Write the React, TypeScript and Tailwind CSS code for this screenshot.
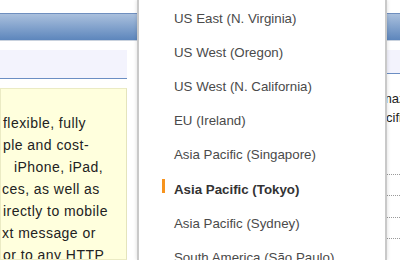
import React from 'react';

const regions = [
  'US East (N. Virginia)',
  'US West (Oregon)',
  'US West (N. California)',
  'EU (Ireland)',
  'Asia Pacific (Singapore)',
  'Asia Pacific (Tokyo)',
  'Asia Pacific (Sydney)',
  'South America (São Paulo)',
];

const selected = 'Asia Pacific (Tokyo)';

// visible slices of the description paragraph behind the menu
const intro = [
  { text: 'flexible, fully', pad: 'pl-[2px]' },
  { text: 'ple and cost-', pad: 'pl-[2px]' },
  { text: 'iPhone, iPad,', pad: 'pl-[13px]' },
  { text: 'ces, as well as', pad: 'pl-[1px]' },
  { text: 'irectly to mobile', pad: 'pl-[2px]' },
  { text: 'xt message or', pad: 'pl-[1px]' },
  { text: 'or to any HTTP', pad: 'pl-[2px]' },
];

function RegionMenu() {
  return (
    <div className="absolute left-[137px] top-0 bottom-0 w-[250px] bg-white border-x-2 border-[#c9c9c9] shadow-[0_0_4px_rgba(0,0,0,0.15)]">
      <ul className="flex flex-col pt-[1.5px]">
        {regions.map(r => {
          const active = r === selected;
          return (
            <li
              key={r}
              className={`relative h-[34.2px] flex items-center pl-[35px] whitespace-nowrap text-[13.3px] ${
                active ? 'font-bold text-[#333]' : 'text-[#4a4a4a]'
              }`}
            >
              {active && <span className="absolute left-[23px] top-[7px] w-[3px] h-[14px] bg-[#f7941e]" />}
              {r}
            </li>
          );
        })}
      </ul>
    </div>
  );
}

export default function App() {
  return (
    <div className="relative w-[400px] h-[260px] overflow-hidden bg-white font-['Liberation_Sans',Arial,sans-serif]">
      <div className="h-[13px]" />
      <div className="h-[28px] border-t border-[#6f8fbf] border-b border-b-[#c9d2de] bg-gradient-to-b from-[#aac0dd] to-[#5d86bc]" />
      <div className="h-[9px]" />

      <div className="flex h-[210px]">
        <div className="w-[127px] flex flex-col">
          <div className="h-[29px] bg-[#f3f3fd] border-b border-[#6b8ec3]" />
          <div className="mt-[9px] flex-1 bg-[#ffffdd] border border-[#ebebc4] border-r-[#e4e4bc] pt-[23px] overflow-hidden">
            {intro.map(l => (
              <div key={l.text} className={`${l.pad} whitespace-nowrap text-[14px] tracking-[0.45px] leading-[22px] text-[#222]`}>
                {l.text}
              </div>
            ))}
          </div>
        </div>

        <div className="flex-1" />

        <div className="w-[14px] flex flex-col overflow-hidden">
          <div className="h-[29px] bg-[#f3f3fd] border-b border-[#6b8ec3]" />
          <div className="mt-[15px] text-[13px] leading-[19px] text-[#222] whitespace-nowrap">
            <div className="-ml-[5px]">maz</div>
            <div>cifi</div>
          </div>
          <div className="mt-[47px] h-[26px] border-t border-dotted border-[#9a9a9a]" />
          <div className="h-[26px] border-t border-dotted border-[#9a9a9a]" />
          <div className="h-[26px] border-t border-dotted border-[#9a9a9a]" />
          <div className="h-[26px] border-t border-dotted border-[#9a9a9a]" />
        </div>
      </div>

      <RegionMenu />
    </div>
  );
}
